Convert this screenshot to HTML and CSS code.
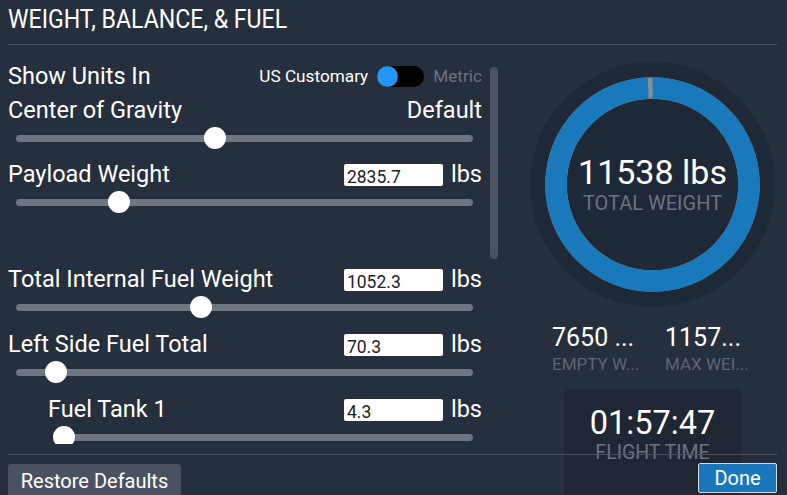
FILE: index.html
```html
<!DOCTYPE html>
<html>
<head>
<meta charset="utf-8">
<link rel="stylesheet" href="styles.css">
</head>
<body>
<div class="app">
  <header class="hdr"><h1 class="title">WEIGHT, BALANCE, &amp; FUEL</h1></header>
  <div class="main">
    <div class="left">
      <div class="scroll">
        <div class="row units">
          <span class="lbl">Show Units In</span>
          <div class="unit-switch">
            <span class="opt on">US Customary</span>
            <span class="toggle"><span class="knob"></span></span>
            <span class="opt off">Metric</span>
          </div>
        </div>
        <div class="field cog">
          <div class="row"><span class="lbl">Center of Gravity</span><span class="lbl">Default</span></div>
          <div class="slider"><div class="track"><div class="thumb" style="left:calc(43.2% - 9.5px)"></div></div></div>
        </div>
        <div class="field">
          <div class="row"><span class="lbl">Payload Weight</span><span class="val"><span class="inp">2835.7</span><span class="unit">lbs</span></span></div>
          <div class="slider"><div class="track"><div class="thumb" style="left:calc(21.1% - 4.6px)"></div></div></div>
        </div>
        <div class="spacer"></div>
        <div class="field">
          <div class="row"><span class="lbl">Total Internal Fuel Weight</span><span class="val"><span class="inp">1052.3</span><span class="unit">lbs</span></span></div>
          <div class="slider"><div class="track"><div class="thumb" style="left:calc(40% - 8.8px)"></div></div></div>
        </div>
        <div class="field">
          <div class="row"><span class="lbl">Left Side Fuel Total</span><span class="val"><span class="inp">70.3</span><span class="unit">lbs</span></span></div>
          <div class="slider"><div class="track"><div class="thumb" style="left:calc(6.7% - 1.5px)"></div></div></div>
        </div>
        <div class="field sub">
          <div class="row"><span class="lbl">Fuel Tank 1</span><span class="val"><span class="inp">4.3</span><span class="unit">lbs</span></span></div>
          <div class="slider"><div class="track"><div class="thumb" style="left:0"></div></div></div>
        </div>
      </div>
      <div class="scrollbar"></div>
    </div>
    <div class="right">
      <div class="donut">
        <svg class="ring" width="245" height="245" viewBox="0 0 245 245">
          <circle cx="122.5" cy="122.5" r="122.5" fill="#1f2836"/>
          <circle cx="122.5" cy="122.5" r="96.5" fill="none" stroke="#8a8d91" stroke-width="21.5"/>
          <circle cx="122.5" cy="122.5" r="96.5" fill="none" stroke="#1a79bb" stroke-width="21.5" stroke-dasharray="601 10" transform="rotate(-90 122.5 122.5)"/>
        </svg>
        <div class="donut-text">
          <div class="big total">11538 lbs</div>
          <div class="cap tw">TOTAL WEIGHT</div>
        </div>
      </div>
      <div class="stats">
        <div class="stat"><div class="num">7650 ...</div><div class="cap small">EMPTY W...</div></div>
        <div class="stat"><div class="num">1157...</div><div class="cap small">MAX WEI...</div></div>
      </div>
      <div class="flight">
        <div class="big ftime">01:57:47</div>
        <div class="cap ft">FLIGHT TIME</div>
      </div>
    </div>
  </div>
  <footer class="foot">
    <button class="btn restore">Restore Defaults</button>
    <button class="btn done">Done</button>
  </footer>
</div>
</body>
</html>
```

FILE: styles.css
```css
html, body {
  margin: 0;
  padding: 0;
  background: #252f3e;
}
.app {
  width: 787px;
  height: 495px;
  overflow: hidden;
  background: #252f3e;
  padding: 0 10px 0 8px;
  box-sizing: border-box;
  display: flex;
  flex-direction: column;
  font-family: Roboto, "Liberation Sans", sans-serif;
  color: #fff;
}
.hdr {
  height: 44px;
  flex: none;
  border-bottom: 1px solid #4a525f;
  display: flex;
  align-items: center;
}
.title {
  margin: 0;
  font-weight: 400;
  font-size: 25px;
  line-height: 30px;
  transform: scaleX(0.925);
  transform-origin: left center;
  white-space: nowrap;
  padding-bottom: 4px;
}
.main {
  height: 409px;
  flex: none;
  display: flex;
}
.left {
  width: 520px;
  flex: none;
  position: relative;
}
.scroll {
  width: 474px;
  height: 399px;
  overflow: hidden;
  padding-top: 17px;
  box-sizing: border-box;
}
.scrollbar {
  position: absolute;
  left: 482px;
  top: 22px;
  width: 8px;
  height: 192px;
  border-radius: 4px;
  background: #4a5261;
}
.row {
  height: 28px;
  display: flex;
  align-items: center;
  justify-content: space-between;
}
.lbl {
  font-size: 23.5px;
  white-space: nowrap;
}
.unit-switch {
  display: flex;
  align-items: center;
}
.opt {
  font-size: 17.2px;
}
.opt.off {
  color: #69717d;
  margin-left: 9px;
}
.toggle {
  width: 47px;
  height: 21px;
  border-radius: 11px;
  background: #000;
  margin-left: 9px;
  display: flex;
  align-items: center;
}
.knob {
  width: 21px;
  height: 21px;
  border-radius: 50%;
  background: #2196f3;
}
.field {
  margin-bottom: 9px;
}
.field.cog {
  margin-top: 6px;
}
.field.cog + .field {
  margin-top: -1px;
}
.spacer {
  height: 40px;
}
.val {
  display: flex;
  align-items: center;
}
.inp {
  width: 99px;
  height: 22px;
  box-sizing: border-box;
  background: #fff;
  border-radius: 2px;
  color: #222;
  font-size: 17.5px;
  line-height: 17px;
  padding: 5px 0 0 3px;
  overflow: hidden;
  margin-top: 2px;
}
.unit {
  font-size: 23.5px;
  margin-left: 8px;
}
.slider {
  height: 28px;
  display: flex;
  align-items: center;
  padding: 0 9px 0 8px;
}
.sub .row {
  padding-left: 40px;
}
.sub .slider {
  padding-left: 45px;
}
.track {
  flex: 1;
  height: 7px;
  border-radius: 4px;
  background: #6e7681;
  position: relative;
}
.thumb {
  position: absolute;
  top: -7.5px;
  width: 22px;
  height: 22px;
  border-radius: 50%;
  background: #fff;
}
.right {
  flex: 1;
  display: flex;
  flex-direction: column;
  align-items: center;
  padding-top: 17px;
}
.donut {
  display: grid;
  width: 245px;
  height: 245px;
  flex: none;
}
.donut > * {
  grid-area: 1 / 1;
}
.donut-text {
  display: flex;
  flex-direction: column;
  align-items: center;
  justify-content: center;
  padding-bottom: 2px;
}
.big {
  font-size: 34px;
  line-height: 36px;
}
.cap {
  color: #6b737f;
  font-size: 20px;
  line-height: 22px;
}
.cap.tw {
  margin-top: 2px;
}
.stats {
  display: flex;
  gap: 25px;
  margin-top: 15.5px;
}
.stat {
  width: 88px;
}
.num {
  font-size: 25px;
  line-height: 30px;
  white-space: nowrap;
}
.cap.small {
  font-size: 17px;
  line-height: 20px;
  margin-top: 1.7px;
  color: #5f6774;
  white-space: nowrap;
}
.flight {
  margin-top: 14.8px;
  width: 177px;
  height: 130px;
  flex: none;
  border-radius: 6px;
  background: #1f2735;
  display: flex;
  flex-direction: column;
  align-items: center;
  padding-top: 15px;
  box-sizing: border-box;
}
.big.ftime {
  font-size: 32.5px;
  line-height: 38px;
}
.cap.ft {
  font-size: 19.5px;
}
.foot {
  flex: none;
  border-top: 1px solid #4a525f;
  display: flex;
  justify-content: space-between;
  align-items: flex-start;
  padding-top: 9px;
}
.btn {
  font-family: Roboto, "Liberation Sans", sans-serif;
  font-size: 20px;
  color: #fff;
  border: none;
  padding: 0;
}
.restore {
  width: 173px;
  height: 36px;
  background: #4a5261;
  border-radius: 3px;
  line-height: 34px;
  padding-bottom: 2px;
}
.done {
  width: 79px;
  height: 30px;
  margin-top: -1px;
  background: #1a78ba;
  border: 1px solid #d0dae4;
  border-radius: 2px;
}
```
